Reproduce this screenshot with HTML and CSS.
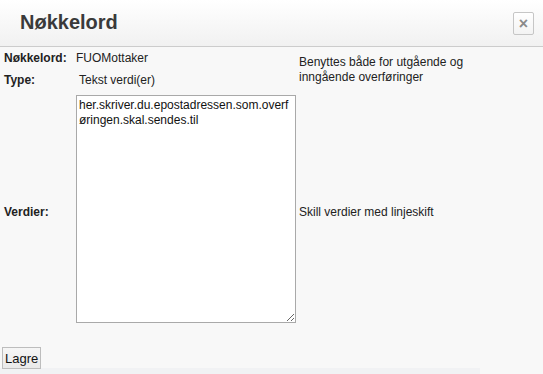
FILE: index.html
```html
<!DOCTYPE html>
<html lang="no">
<head>
  <meta charset="UTF-8">
  <meta name="viewport" content="width=device-width, initial-scale=1.0">
  <title>Nøkkelord</title>
  <link rel="stylesheet" href="styles.css">
</head>
<body>

  <header class="dialog-header">
    <h1>Nøkkelord</h1>
    <button type="button" class="close-btn" aria-label="Lukk">&times;</button>
  </header>

  <form class="keyword-form">
    <table class="keyword-table">
      <tr class="row-name">
        <th>Nøkkelord:</th>
        <td>FUOMottaker</td>
        <td class="hint" rowspan="2">Benyttes både for utgående og<br>inngående overføringer</td>
      </tr>
      <tr class="row-type">
        <th>Type:</th>
        <td><span class="type-value">Tekst verdi(er)</span></td>
      </tr>
      <tr class="row-values">
        <th>Verdier:</th>
        <td><textarea name="values">her.skriver.du.epostadressen.som.overføringen.skal.sendes.til</textarea></td>
        <td class="hint">Skill verdier med linjeskift</td>
      </tr>
    </table>

    <div class="form-actions">
      <button type="submit" class="save-btn">Lagre</button>
    </div>
  </form>
  <div class="bottom-strip"></div>

</body>
</html>
```

FILE: styles.css
```css
body {
  margin: 0;
  font-family: "Liberation Sans", Arial, sans-serif;
  font-size: 12px;
  line-height: 15px;
  color: #222;
  background-color: #f8f8f8;
}

.dialog-header {
  display: flex;
  align-items: center;
  justify-content: space-between;
  box-sizing: border-box;
  height: 47px;
  padding: 0 9px 2px 20px;
  background: linear-gradient(#ffffff, #f1f1f1);
  border-bottom: 1px solid #cccccc;
}

.dialog-header h1 {
  margin: 0;
  font-size: 20px;
  line-height: 24px;
  font-weight: bold;
  color: #3a3a3a;
}

.close-btn {
  width: 21px;
  height: 23px;
  padding: 0;
  margin-top: 2px;
  border: 1px solid #c6c6c6;
  border-radius: 2px;
  background: linear-gradient(#ffffff, #f3f3f3);
  color: #8a8a8a;
  font-family: "Liberation Sans", Arial, sans-serif;
  font-size: 16px;
  font-weight: bold;
  line-height: 19px;
}

.keyword-form {
  padding-top: 1px;
  height: 320px;
}

.keyword-table {
  margin-left: 2px;
  border-collapse: collapse;
}

.keyword-table th,
.keyword-table td {
  padding: 0 2px;
  text-align: left;
  vertical-align: middle;
}

.keyword-table th {
  width: 68px;
  font-weight: bold;
  color: #222;
}

.row-name th,
.row-name td {
  height: 21px;
}

.row-type th,
.row-type td {
  height: 22px;
}

.type-value {
  padding-left: 3px;
}

.row-values td:nth-child(2) {
  padding-top: 4px;
  padding-bottom: 10px;
}

.keyword-table .hint {
  width: 240px;
  padding-left: 1px;
  color: #222;
}

textarea {
  display: block;
  box-sizing: border-box;
  width: 220px;
  height: 228px;
  margin: 0;
  padding: 2px;
  border: 1px solid #a9a9a9;
  background: #fff;
  font-family: "Liberation Sans", Arial, sans-serif;
  font-size: 12px;
  line-height: 15px;
  color: #111;
}

.form-actions {
  margin-top: 14px;
  padding-left: 2px;
}

.save-btn {
  height: 22px;
  padding: 0 2px;
  border: 1px solid #bdbdbd;
  background: linear-gradient(#f6f6f6, #e9e9e9);
  color: #111;
  font-family: "Liberation Sans", Arial, sans-serif;
  font-size: 13px;
}

.bottom-strip {
  width: 480px;
  height: 6px;
  background-color: #f1f2f4;
}
```
